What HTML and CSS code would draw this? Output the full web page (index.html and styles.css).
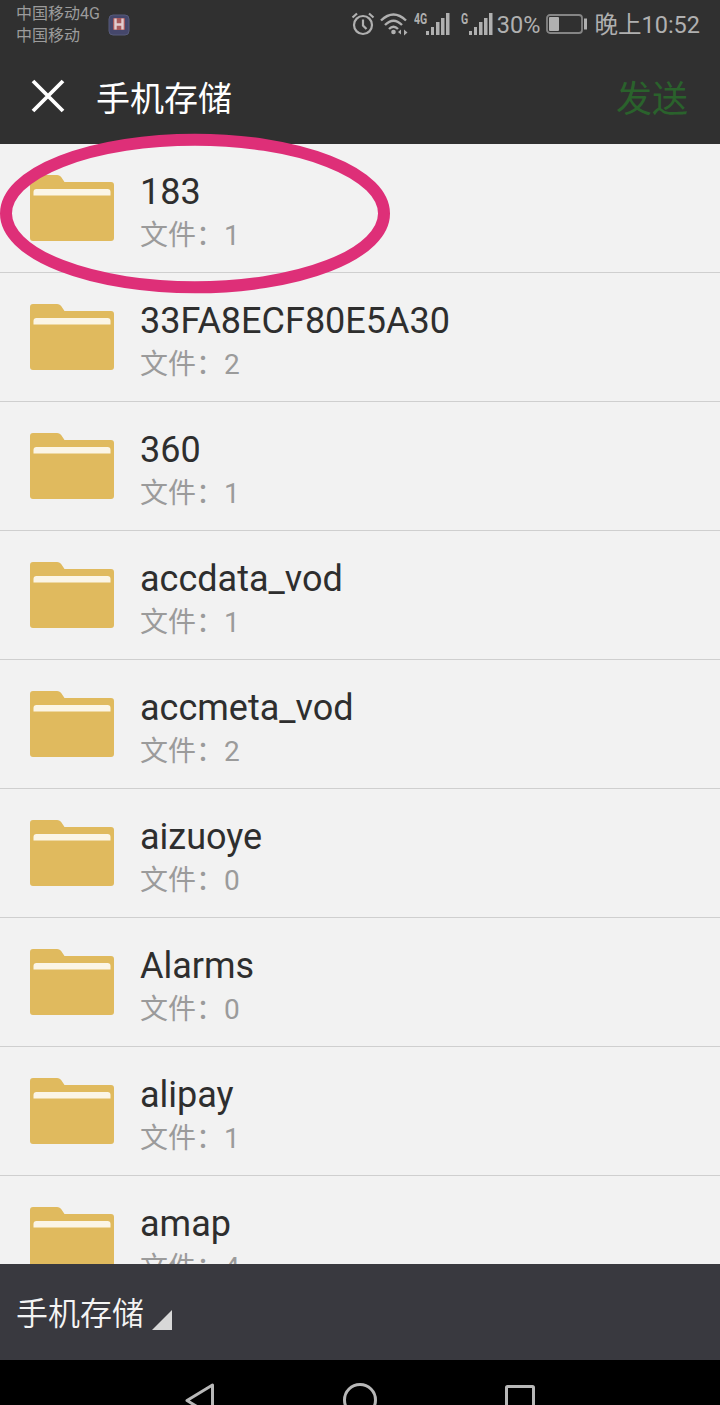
FILE: index.html
```html
<!DOCTYPE html>
<html lang="zh-CN">

<head>
  <meta charset="UTF-8" />
  <meta name="viewport" content="width=device-width, initial-scale=1" />
  <title>手机存储</title>
  <link rel="stylesheet" href="styles.css">
</head>

<body>
  <div class="screen">
    <!-- Status bar -->
    <div class="status">
      <div class="carriers">
        <span>中国移动4G</span>
        <span>中国移动</span>
      </div>
      <svg class="app-badge" width="22" height="22" viewBox="0 0 22 22">
        <rect x="1" y="1" width="20" height="20" rx="4" fill="#45476b" stroke="#565a7a" />
        <rect x="5" y="4" width="12" height="12" rx="1" fill="#a85a5c" />
        <path d="M7.500 4.500v11M14.500 4.500v11M7.500 10.500h7" fill="none" stroke="#e0cdd0" stroke-width="2.400" />
      </svg>
      <div class="status-icons">
        <svg class="alarm" width="24" height="24" viewBox="0 0 24 24" fill="none" stroke="#b0b0b0" stroke-width="2.200">
          <circle cx="12" cy="13" r="9" />
          <path d="M12 7.500v6l3.500 3.500M1.500 5.500l4.500-4M22.500 5.500l-4.500-4" />
        </svg>
        <svg class="wifi" width="28" height="24" viewBox="0 0 28 24" fill="none" stroke="#b0b0b0" stroke-width="2.400">
          <path d="M1 8.500Q13.500-3.500 26 8.500M5 13Q13.500 4.500 22 13M9 17Q13.500 12.500 18 17" />
          <circle cx="13.500" cy="20" r="2.300" fill="#b0b0b0" stroke="none" />
          <path d="M18 20l3-2.500v5zM24 17.500l3.500 3-3.500 3z" fill="#b0b0b0" stroke="none" />
        </svg>
        <div class="signal">
          <span class="net">4G</span>
          <svg width="24" height="23" viewBox="0 0 24 23" fill="#b0b0b0">
            <path d="M0 18h3v4H0zM5 14h3v8H5zM10 9h3.500v13H10zM15 5h3.500v17H15zM20 0h3.500v22H20z" />
          </svg>
        </div>
        <div class="signal signal-2">
          <span class="net">G</span>
          <svg width="24" height="23" viewBox="0 0 24 23" fill="#b0b0b0">
            <path d="M0 18h3v4H0zM5 14h3v8H5zM10 9h3.500v13H10zM15 5h3.500v17H15zM20 0h3.500v22H20z" />
          </svg>
        </div>
        <span class="percent">30%</span>
        <svg class="battery" width="42" height="20" viewBox="0 0 42 20">
          <rect x="1" y="1" width="35" height="18" rx="3" fill="none" stroke="#858585" stroke-width="1.800" />
          <rect x="3" y="3" width="10" height="14" rx="1" fill="#b0b0b0" />
          <rect x="38" y="4.500" width="3" height="11" fill="#b0b0b0" />
        </svg>
        <span class="clock">晚上10:52</span>
      </div>
    </div>

    <div class="topbar">
      <svg class="close" width="34" height="34" viewBox="0 0 34 34">
        <path d="M2 2l30 30M32 2L2 32" stroke="#fff" stroke-width="3.800" />
      </svg>
      <h1>手机存储</h1>
      <span class="send">发送</span>
    </div>

    <!-- Folder list, filled by the script -->
    <div class="list" id="list"></div>

    <div class="storage">
      <span>手机存储</span>
      <svg width="20" height="20" viewBox="0 0 20 20"><path d="M20 0v20H0z" fill="#d8d8d8" /></svg>
    </div>

    <!-- Android navigation -->
    <div class="nav">
      <svg width="720" height="45" viewBox="0 0 720 45" fill="none" stroke="#b8b8b8" stroke-width="3" stroke-linejoin="round">
        <path d="M212.500 25v31L187 40.500z" />
        <circle cx="360" cy="40" r="15.500" />
        <rect x="506.500" y="26.500" width="27" height="27" rx="1" />
      </svg>
    </div>

    <svg class="marker" width="390" height="162" viewBox="0 0 390 162">
      <ellipse cx="195" cy="81.500" rx="189" ry="73.800" fill="none" stroke="#de2f78" stroke-width="12" />
    </svg>
  </div>

  <script>
    const folders = [
      ['183', 1],
      ['33FA8ECF80E5A30', 2],
      ['360', 1],
      ['accdata_vod', 1],
      ['accmeta_vod', 2],
      ['aizuoye', 0],
      ['Alarms', 0],
      ['alipay', 1],
      ['amap', 4]
    ];

    const list = document.getElementById('list');

    folders.forEach(([name, count]) => {
      const row = document.createElement('div');
      row.className = 'row';
      row.innerHTML = `
        <svg class="folder" width="84" height="66" viewBox="0 0 84 66">
          <path d="M3 0h24c2 0 3.500 1 4.500 2.500l3 4.500h46.500a3 3 0 0 1 3 3v53a3 3 0 0 1-3 3H3a3 3 0 0 1-3-3V3a3 3 0 0 1 3-3z" fill="#e0ba5e" />
          <path d="M3.500 20.500v-3.500a3 3 0 0 1 3-3h71a3 3 0 0 1 3 3v3.500z" fill="#fbf5e6" />
        </svg>
        <div class="info">
          <div class="name">${name}</div>
          <div class="count">文件：${count}</div>
        </div>
      `;
      list.appendChild(row);
    });
  </script>
</body>

</html>
```
FILE: styles.css
```css
body {
  margin: 0;
  background: #000;
  font-family: Roboto, "Noto Sans CJK SC", sans-serif;
}

.screen {
  position: relative;
  display: flex;
  flex-direction: column;
  width: 720px;
  height: 1405px;
  overflow: hidden;
}

.status {
  display: flex;
  align-items: center;
  height: 48px;
  flex-shrink: 0;
  padding: 0 20px 0 16px;
  box-sizing: border-box;
  background: #303030;
  color: #b0b0b0;
}

.carriers {
  display: flex;
  flex-direction: column;
  width: 92px;
  padding-top: 2px;
  font-size: 16px;
  line-height: 22px;
  color: #9c9c9c;
  white-space: nowrap;
}

.app-badge {
  margin-top: 2px;
}

.status-icons {
  display: flex;
  align-items: center;
  margin-left: auto;
}

.wifi {
  margin: 0 6px 0 5px;
}

.signal {
  display: flex;
  align-items: flex-start;
}

.signal svg {
  margin-top: 1px;
}

.signal-2 {
  margin: 0 4px 0 11px;
}

.net {
  font-size: 14px;
  line-height: 14px;
  font-weight: 700;
  transform: scaleX(0.75);
  transform-origin: left;
  margin-right: -5px;
}

.signal-2 .net {
  margin-right: -2px;
}

.percent,
.clock {
  padding-top: 2px;
  font-size: 23.500px;
  line-height: 46px;
  white-space: nowrap;
}

.battery {
  margin: 0 6px;
}

.topbar {
  display: flex;
  align-items: center;
  height: 96px;
  flex-shrink: 0;
  padding: 0 32px 0 31px;
  box-sizing: border-box;
  background: #303030;
}

.topbar h1 {
  margin: 0 0 0 31px;
  font-size: 34px;
  font-weight: 400;
  color: #fff;
}

.send {
  margin: 0 0 0 auto;
  font-size: 36px;
  color: #2a622c;
}

.list {
  height: 1120px;
  flex-shrink: 0;
  overflow: hidden;
  background: #f2f2f2;
}

.row {
  display: flex;
  height: 129px;
  box-sizing: border-box;
  padding-left: 30px;
  border-bottom: 1px solid #cfcfcf;
}

.folder {
  margin-top: 31px;
}

.info {
  margin: 26px 0 0 26px;
}

.name {
  font-size: 36px;
  line-height: 44px;
  color: #2e2e2e;
}

.count {
  padding-top: 2px;
  font-size: 28px;
  line-height: 40px;
  color: #9b9b9b;
}

.storage {
  display: flex;
  align-items: center;
  height: 96px;
  flex-shrink: 0;
  padding-left: 16px;
  background: #39393f;
  color: #f4f4f4;
  font-size: 32px;
  font-weight: 350;
}

.storage span {
  margin-bottom: 2px;
}

.storage svg {
  margin: 16px 0 0 8px;
}

.nav {
  height: 45px;
  background: #000;
}

.nav svg {
  display: block;
}

/* hand-drawn highlight over the first folder */
.marker {
  position: absolute;
  left: 0;
  top: 132px;
}
```
